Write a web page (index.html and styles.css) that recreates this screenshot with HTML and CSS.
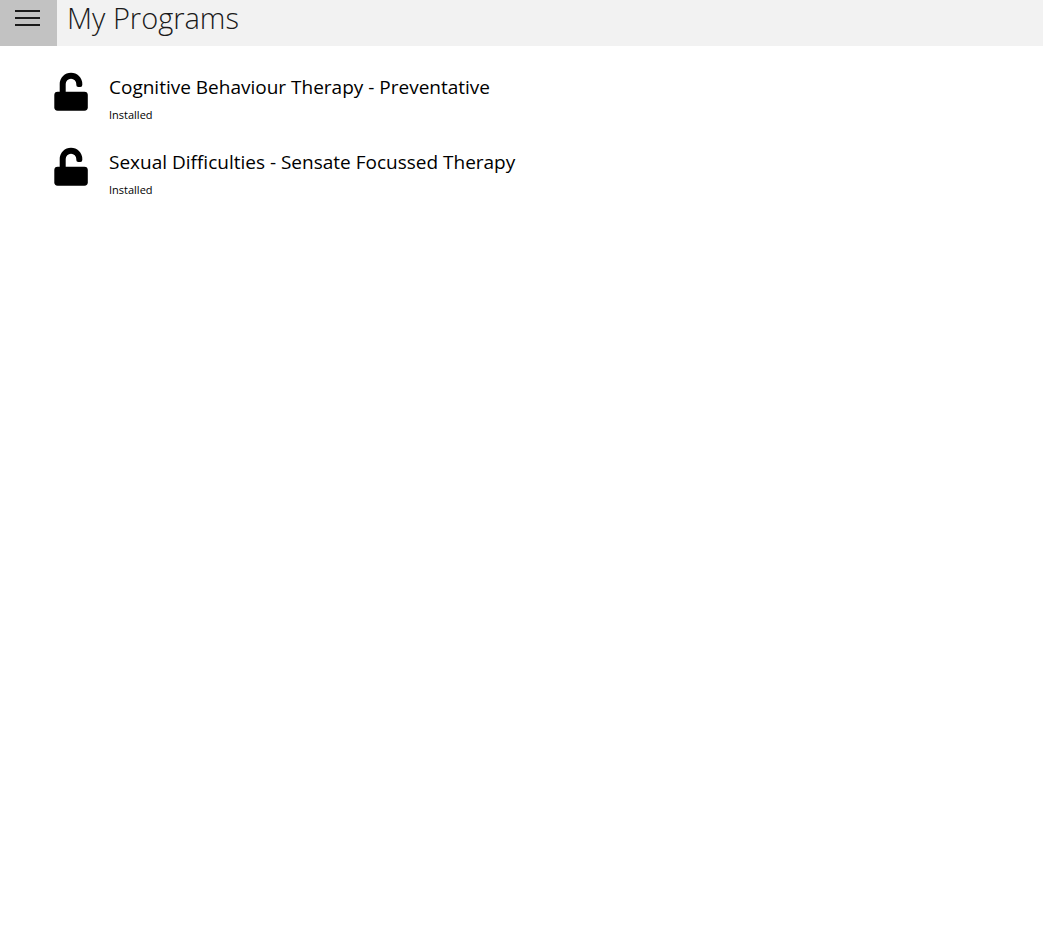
FILE: index.html
```html
<!DOCTYPE html>
<html lang="en">
<head>
    <meta charset="UTF-8">
    <meta name="viewport" content="width=device-width, initial-scale=1.0">
    <title>My Programs</title>
    <link rel="stylesheet" href="styles.css">
</head>
<body>
    <header class="top-bar">
        <button class="menu-button" type="button" aria-label="Menu">
            <svg width="25" height="16" viewBox="0 0 25 16" aria-hidden="true">
                <path d="M0 0h25v2H0zM0 7h25v2H0zM0 14h25v2H0z" fill="#1a1a1a"/>
            </svg>
        </button>
        <h1>My Programs</h1>
    </header>

    <main>
        <ul class="programs">
            <li class="program">
                <svg class="lock" viewBox="0 0 34 39" aria-hidden="true">
                    <rect x="0.3" y="19.7" width="33.5" height="19" rx="3.4"/>
                    <path d="M5.7 21V12a11.3 11.3 0 0 1 22.6 0v1a2 2 0 0 1-2 2h-2a2 2 0 0 1-2-2v-1a5.3 5.3 0 0 0-10.6 0v9z"/>
                </svg>
                <div class="details">
                    <h2>Cognitive Behaviour Therapy - Preventative</h2>
                    <p>Installed</p>
                </div>
            </li>
            <li class="program">
                <svg class="lock" viewBox="0 0 34 39" aria-hidden="true">
                    <rect x="0.3" y="19.7" width="33.5" height="19" rx="3.4"/>
                    <path d="M5.7 21V12a11.3 11.3 0 0 1 22.6 0v1a2 2 0 0 1-2 2h-2a2 2 0 0 1-2-2v-1a5.3 5.3 0 0 0-10.6 0v9z"/>
                </svg>
                <div class="details">
                    <h2>Sexual Difficulties - Sensate Focussed Therapy</h2>
                    <p>Installed</p>
                </div>
            </li>
        </ul>
    </main>
</body>
</html>
```
FILE: styles.css
```css
body {
    margin: 0;
    background-color: #fff;
    color: #000;
    font-family: "Segoe UI", "Open Sans", "Noto Sans", sans-serif;
}

h1, h2, p, ul {
    margin: 0;
    padding: 0;
}

.top-bar {
    display: flex;
    align-items: flex-start;
    height: 46px;
    background-color: #f2f2f2;
}

.menu-button {
    display: flex;
    justify-content: center;
    align-items: flex-start;
    width: 57px;
    height: 46px;
    padding: 10px 2px 0 0;
    border: none;
    background-color: #c2c2c2;
    cursor: pointer;
}

.top-bar h1 {
    padding-left: 10px;
    font-size: 29px;
    font-weight: 300;
    line-height: 36px;
    color: #1a1a1a;
}

.programs {
    padding: 22px 54px;
    list-style: none;
}

.program {
    display: flex;
    gap: 21px;
    height: 75px;
}

.lock {
    flex: none;
    width: 34px;
    height: 39px;
    margin-top: 4px;
}

.details h2 {
    font-size: 19px;
    font-weight: 400;
    line-height: 38px;
}

.details p {
    font-size: 11px;
    line-height: 18px;
}
```
